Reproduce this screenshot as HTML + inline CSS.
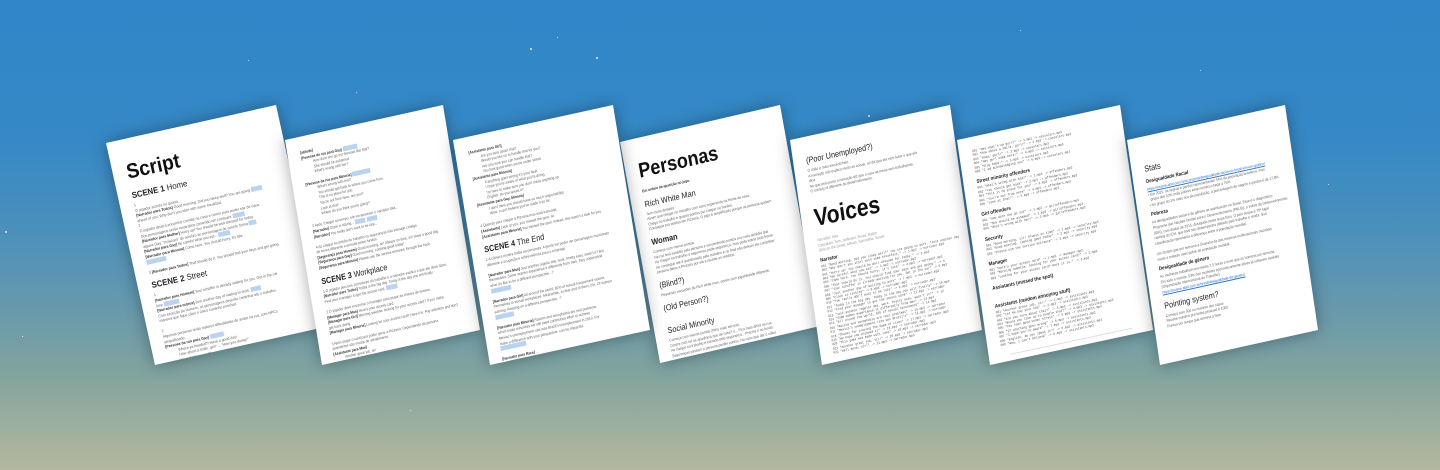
<!DOCTYPE html>
<html><head><meta charset="utf-8"><style>
*{margin:0;padding:0;box-sizing:border-box}
body{width:1440px;height:470px;overflow:hidden;position:relative;font-family:"Liberation Sans","DejaVu Sans",sans-serif;
background:linear-gradient(180deg,#2f86c8 0%,#3689c6 30%,#4b90bb 49%,#6598ae 64%,#82a49e 80%,#b3b89e 100%)}
.s{position:absolute;width:2px;height:2px;background:#fff;border-radius:50%;opacity:.85}
.p{position:absolute;left:0;top:0;width:200px;height:240px;background:#fff;transform-origin:0 0;overflow:hidden;
box-shadow:0 0 18px rgba(0,0,0,.35);padding:14px 14px 0 16px;color:#666;font-size:4.1px;line-height:5.6px}
.p h1{font-size:22px;line-height:26px;color:#111;font-weight:bold;margin:8px 0 6px}
.p h2{font-size:9px;line-height:12px;color:#222;font-weight:normal;margin:5px 0 2px}
.p h2 b{font-weight:bold}
.p h3{font-size:5.5px;line-height:8px;color:#222;margin:4px 0 1px}
.p .l{white-space:nowrap}
.p .l b{color:#333}
.p .i{padding-left:14px;white-space:nowrap}
.p .m{font-family:"Liberation Mono",monospace;font-size:3.6px;line-height:4.4px;white-space:nowrap;color:#555}
.hl{background:#b9d3f0;color:#b9d3f0}
.a{color:#2a6fc9;text-decoration:underline}
.g{color:#999}
</style></head><body>
<div class="s" style="left:530px;top:48px"></div>
<div class="s" style="left:596px;top:57px"></div>
<div class="s" style="left:557px;top:37px;width:1px;height:1px"></div>
<div class="s" style="left:5px;top:231px"></div>
<div class="s" style="left:22px;top:336px;width:1px;height:1px"></div>
<div class="s" style="left:868px;top:115px"></div>
<div class="s" style="left:1328px;top:184px;width:1px;height:1px"></div>
<div class="s" style="left:410px;top:410px;width:1px;height:1px"></div>
<div class="s" style="left:1020px;top:30px;width:1px;height:1px"></div>
<div class="s" style="left:1200px;top:70px;width:1px;height:1px"></div>
<div class="s" style="left:356px;top:92px;width:1px;height:1px"></div>
<div class="s" style="left:248px;top:60px;width:1px;height:1px"></div>

<!-- Page 1 -->
<div class="p" style="transform:matrix(.85,-.19,.204,.925,106,143);z-index:1">
<h1>Script</h1>
<h2><b>SCENE 1</b> Home</h2>
<div class="l">1</div>
<div class="l">O jogador acorda no quarto.</div>
<div class="l"><b>[Narrador para Todos]</b> Good morning. Did you sleep well? You are going <span class="hl">to work</span></div>
<div class="l">ahead of you. Why don't you start with some breakfast.</div>
<div class="l">2</div>
<div class="l">O jogador deverá encontrar comida na casa e comer para poder sair de casa.</div>
<div class="l">Dos personagens serão mostrados comendo um croissant. <span class="hl">______</span></div>
<div class="l"><b>[Narrador para Mulher]</b> Hurry up! You should be well-dressed for today.</div>
<div class="l">alguns Gay, "croissant" do cérebro ao personagem de cuento forma <span class="hl">____</span></div>
<div class="l"><b>[Narrador para Gay]</b> Be careful what you eat... <span class="hl">______</span></div>
<div class="l"><b>[Narrador para Minoria]</b> Come here. You should hurry, it's late</div>
<div class="l"><span class="hl">__________</span></div>
<div class="l">&nbsp;</div>
<div class="l">3 <b>[Narrador para Todos]</b> That should do it. You should find your keys and get going.</div>
<h2><b>SCENE 2</b> Street</h2>
<div class="l">1</div>
<div class="l"><b>[Narrador para Homem]</b> Your schaffer is already waiting for you. Get in the car</div>
<div class="l">time <span class="hl">________</span></div>
<div class="l"><b>[Narrador para outros]</b> Just another day of waiting to work. <span class="hl">_____</span></div>
<div class="l">Com exceção do Homem, os personagens deverão caminhar até o trabalho.</div>
<div class="l">maneira que fique claro o único caminho possível.</div>
<div class="l">&nbsp;</div>
<div class="l">2</div>
<div class="l">Algumas personas terão maiores dificuldades de andar na rua, com NPCs</div>
<div class="l">atrapalhando.</div>
<div class="l"><b>[Pessoas da rua para Gay]</b> <span class="hl">_______</span></div>
<div class="i">Where ya headed?! Have a good day!</div>
<div class="i">How about a smile, girl? ... "How you doing?"</div>
<div class="i">Hey what's up gurl?</div>
<div class="i">Daaa, gurl!</div>
<div class="i">I am acknowledging you for being beautiful!</div>
<div class="i">Hey, gurl!</div>
<div class="i">Hey gurl come here!</div>
<div class="i">Stay babe!</div>
</div>

<!-- Page 2 -->
<div class="p" style="transform:matrix(.79,-.175,.154,.9375,285,140);z-index:2">
<div class="l"><b>[atitude]</b></div>
<div class="l"><b>[Pessoas da rua para Gay]</b> <span class="hl">________</span></div>
<div class="i">How dare she go out dressed like that?</div>
<div class="i">She should be ashamed</div>
<div class="i">What's wrong with her?</div>
<div class="l">&nbsp;</div>
<div class="l"><b>[Pessoas da rua para Minoria]</b> <span class="hl">__________</span></div>
<div class="i">What's wrong with him?</div>
<div class="i">You should get back to where you came from.</div>
<div class="i">This is no place for you.</div>
<div class="i">You're not from here, are you?</div>
<div class="i">Look at that!</div>
<div class="i">Where do you think you're going?</div>
<div class="l">&nbsp;</div>
<div class="l">3 Após "chegar ao tempo, ele vai aparecer o narrador fala...</div>
<div class="l"><b>[Narrador]</b> Clock is ticking... <span class="hl">______</span> <span class="hl">______</span></div>
<div class="l"><b>[Narrador]</b> You really don't want to be late...</div>
<div class="l">&nbsp;</div>
<div class="l">4 Ao chegar no prédio do trabalho os seguranças irão interagir contigo</div>
<div class="l">de forma diferente a entrada pelos fundos.</div>
<div class="l"><b>[Segurança para Homem]</b> Good morning, sir! Always on time, sir! Have a good day.</div>
<div class="l"><b>[Segurança para Gay]</b> Good morning. Looking good today!</div>
<div class="l"><b>[Segurança para Minoria]</b> Please use the service entrance through the back.</div>
<h2><b>SCENE 3</b> Workplace</h2>
<div class="l">1 O jogador percorre corredores do trabalho e o narrador explica o que ele deve fazer.</div>
<div class="l"><b>[Narrador para Todos]</b> Today is the big day. Today is the day you will finally</div>
<div class="l">Find your manager to get the access card. <span class="hl">______</span></div>
<div class="l">&nbsp;</div>
<div class="l">2 O jogador deve encontrar o manager para pegar as chaves de acesso.</div>
<div class="l"><b>[Manager para Man]</b> Here's your access card.</div>
<div class="l"><b>[Manager para Girl]</b> Morning sweetie, looking for your access card? If you make</div>
<div class="l">get back doing.</div>
<div class="l"><b>[Manager para Minoria]</b> Looking for your access card? Here it is. Pay attention and don't</div>
<div class="l">&nbsp;</div>
<div class="l">3 Após pegar o card para poder gerar a Pizzaria. Dependendo da persona</div>
<div class="l">assistentes vão mudar de atendimento.</div>
<div class="l"><b>[Assistants para Man]</b></div>
<div class="i">Another great job, sir!</div>
<div class="i">Let me pay your cab after work.</div>
<div class="i">Well done, sir!</div>
</div>

<!-- Page 3 -->
<div class="p" style="transform:matrix(.8,-.175,.154,.9375,453,140);z-index:3">
<div class="l"><b>[Assistants para Girl]</b></div>
<div class="i">Are you sure about that?</div>
<div class="i">Would you like us to handle that for you?</div>
<div class="i">Are you sure you can handle that?</div>
<div class="i">You look good when you're under stress.</div>
<div class="l"><b>[Assistants para Minoria]</b></div>
<div class="i">If anything goes wrong it's your fault.</div>
<div class="i">I hope you're aware of what you're doing.</div>
<div class="i">I'm here to make sure you don't mess anything up.</div>
<div class="i">English, do you speak it?</div>
<div class="l"><b>[Assistants para Gay, Minoria]</b></div>
<div class="i">I don't think you should have so much responsibility.</div>
<div class="i">Wow, I can't believe you've made it so far.</div>
<div class="l">&nbsp;</div>
<div class="l">4 Quando para chegar a Pizzaria mas está trancada.</div>
<div class="l"><b>[Assistants]</b> Look at you, you missed the spot, sir.</div>
<div class="l"><b>[Assistants para Minoria]</b> You missed the spot. Indeed, this wasn't a task for you.</div>
<h2><b>SCENE 4</b> The End</h2>
<div class="l">1 A câmera mostra todas as personas. A gente vai poder ver personagem mostrando</div>
<div class="l">diferente a ocupação e sobrevivência para o emprego.</div>
<div class="l">&nbsp;</div>
<div class="l"><b>[Narrador para Man]</b> Just another regular day, work. Pretty easy, wasn't it? But</div>
<div class="l">themselves. Some women experience it differently from men, they understand</div>
<div class="l">what it's like to be a different perspective...?</div>
<div class="l"><span class="hl">___________</span></div>
<div class="l">&nbsp;</div>
<div class="l"><b>[Narrador para Girl]</b> All around the world, 82% of sexual harassment victims</div>
<div class="l">themselves in sexual workplaces. Meanwhile, a clear and of them, 6%. Of women</div>
<div class="l">earning. Keeping on a different perspective...?</div>
<div class="l"><span class="hl">__________</span></div>
<div class="l">&nbsp;</div>
<div class="l"><b>[Narrador para Minoria]</b> Racism and xenophobia are real problems.</div>
<div class="l">which make minorities we still need continuous effort to achieve</div>
<div class="l">Mexico's unemployment rate was Brazil's unemployment in 2010. For</div>
<div class="l">make a difference with your perspective, can be impactful.</div>
<div class="l"><span class="hl">______________</span></div>
<div class="l">&nbsp;</div>
<div class="l"><b>[Narrador para Race]</b> ...</div>
<div class="l">&nbsp;</div>
<div class="l">2 <b>[Narrador para Todos]</b> Thanks for playing The Game of Lives. We hope</div>
<div class="l">ourselves. This game was made with love by the Indie Brazil Team. We are</div>
<div class="l">Cunha, Diego Tomaz, Cristiano Medeiros (Collins), Leonardo Schiefeld, Victoria Alves</div>
</div>

<!-- Page 4 -->
<div class="p" style="transform:matrix(.8,-.185,.167,.921,620,142);z-index:0">
<h1>Personas</h1>
<div class="l" style="font-size:4px"><b>Em ordem de aparição no jogo.</b></div>
<h2>Rich White Man</h2>
<div class="l">Tem muito dinheiro.</div>
<div class="l">Assim que chegar no trabalho com carro esperando na frente de casa.</div>
<div class="l">Chega no trabalho e quanto pontos por chegar no horário.</div>
<div class="l">Consegue pra tarefas em Pizzaria. O jogo é simplificado porque as pessoas ajudam.</div>
<h2 style="font-weight:bold">Woman</h2>
<div class="l">Começa com menos pontos.</div>
<div class="l">Na rua terá assédio pela persona e vai perdendo pontos pra cada assédio que</div>
<div class="l">Ao chegar no trabalho o segurança pede segurança, mas pode entrar pela frente.</div>
<div class="l">Ao conseguir ele é questionado pelo trabalho e no final não deixam ela completar</div>
<div class="l">persona deixa a Pizzaria por ela e recebe os créditos.</div>
<h2>(Blind?)</h2>
<div class="l">Pequenas variações do Rich white man, porém com jogabilidade diferente.</div>
<h2>(Old Person?)</h2>
<div class="l">&nbsp;</div>
<h2>Social Minority</h2>
<div class="l">Começa com menos pontos (ficha mais escura).</div>
<div class="l">Ocorre com tal na aparência que de casa? o... Fica mais difícil na rua.</div>
<div class="l">Ao chegar no trabalho é barrado pelo segurança... Precisa ir no fundo.</div>
<div class="l">Seguranças passam a persona perder pontos. No caso que dar o voltar.</div>
<div class="l">No final do trabalho ela a dificuldade por chegar sua cerquem dado e se desenvolve.</div>
</div>

<!-- Page 5 -->
<div class="p" style="transform:matrix(.8,-.175,.133,.9375,790,140);z-index:1">
<h2>(Poor Unemployed?)</h2>
<div class="l">O chão é mais escuro/cheio.</div>
<div class="l">A narração não explica muito as coisas, só diz que ela vem fazer o que ela</div>
<div class="l">dica.</div>
<div class="l">No que pelo porto a narração diz que o cara na mesa vem trabalhando.</div>
<div class="l">O começo é diferente do desenvolvimento.</div>
<h1 style="font-size:26px;line-height:30px;margin-top:10px">Voices</h1>
<div class="l g">Narrador: Alex</div>
<div class="l g">Cassalars: Tom, Jefferson, Bruce, Ralph</div>
<div class="l g">Girls on the Street: Allison, Samantha, Susan</div>
<h3>Narrator</h3>
<div class="m">001 "Good morning. Did you sleep well?" You are going to work. "Just another day</div>
<div class="m">002 "Why don't you start with some breakfast." -&gt; 1.mp3 -&gt; narrador.mp3</div>
<div class="m">003 "Hurry up! You should be well-dressed for today." -&gt; 2.mp3</div>
<div class="m">004 "Be careful what you eat" -&gt; 3.mp3 -&gt; narrador.mp3</div>
<div class="m">005 "Come here. You should hurry, it's late" -&gt; 4.mp3 -&gt; narrador.mp3</div>
<div class="m">006 "That should do it. You should find your keys and get going." -&gt; 5</div>
<div class="m">007 "Your schaffer is already waiting for you. Get in the car" -&gt; 6.mp3</div>
<div class="m">008 "Just another day of waiting to work" -&gt; 7.mp3 -&gt; narrador.mp3</div>
<div class="m">009 "Clock is ticking" -&gt; 8.mp3 -&gt; narrador.mp3</div>
<div class="m">010 "You really don't want to be late" -&gt; 9.mp3 -&gt; narrador.mp3</div>
<div class="m">011 "Today is the big day. Today is the day you will finally" -&gt; 10.mp3</div>
<div class="m">012 "Find your manager to get the access card" -&gt; 11.mp3 -&gt; narrador</div>
<div class="m">013 "Just another regular day, work. Pretty easy, wasn't it?" -&gt; 12</div>
<div class="m">014 "Some women experience it differently from men" -&gt; 13.mp3</div>
<div class="m">015 "All around the world, 82% of sexual harassment" -&gt; 14.mp3</div>
<div class="m">016 "Racism and xenophobia are real problems" -&gt; 15.mp3 -&gt; narrador</div>
<div class="m">017 "Mexico's unemployment rate was Brazil's" -&gt; 16.mp3 -&gt; narrador</div>
<div class="m">018 "Thanks for playing The Game of Lives" -&gt; 17.mp3 -&gt; narrador.mp3</div>
<div class="m">019 "We hope you enjoyed it" -&gt; 18.mp3 -&gt; narrador.mp3</div>
<div class="m">020 "This game was made with love" -&gt; 19.mp3 -&gt; narrador.mp3</div>
<div class="m">021 "Another great job, sir!" -&gt; 20.mp3 -&gt; narrador.mp3</div>
<div class="m">022 "Well done, sir!" -&gt; 21.mp3 -&gt; narrador.mp3</div>
<div class="l">&nbsp;</div>
<h3>Cassalars</h3>
<div class="m">001 "Where ya headed?! Have a good day!" -&gt; 1.mp3 -&gt; cassalars.mp3</div>
</div>

<!-- Page 6 -->
<div class="p" style="transform:matrix(.815,-.175,.1375,.9375,957,140);z-index:2">
<div class="m">001 "Hey what's up gurl?" -&gt; 1.mp3 -&gt; cassalars.mp3</div>
<div class="m">002 "How about a smile, girl?" -&gt; 2.mp3 -&gt; cassalars.mp3</div>
<div class="m">003 "Daaa, gurl!" -&gt; 3.mp3 -&gt; cassalars.mp3</div>
<div class="m">004 "Hey gurl come here!" -&gt; 4.mp3 -&gt; cassalars.mp3</div>
<div class="m">005 "Stay babe!" -&gt; 5.mp3 -&gt; cassalars.mp3</div>
<div class="m">006 "I am acknowledging you" -&gt; 6.mp3 -&gt; cassalars.mp3</div>
<h3>Street minority offenders</h3>
<div class="m">001 "What's wrong with him?" -&gt; 1.mp3 -&gt; offenders.mp3</div>
<div class="m">002 "You should get back" -&gt; 2.mp3 -&gt; offenders.mp3</div>
<div class="m">003 "This is no place for you" -&gt; 3.mp3 -&gt; offenders.mp3</div>
<div class="m">004 "You're not from here" -&gt; 4.mp3 -&gt; offenders.mp3</div>
<div class="m">005 "Look at that!" -&gt; 5.mp3 -&gt; offenders.mp3</div>
<h3>Girl offenders</h3>
<div class="m">001 "How dare she go out" -&gt; 1.mp3 -&gt; girloffenders.mp3</div>
<div class="m">002 "She should be ashamed" -&gt; 2.mp3 -&gt; girloffenders.mp3</div>
<div class="m">003 "What's wrong with her?" -&gt; 3.mp3 -&gt; girloffenders.mp3</div>
<h3>Security</h3>
<div class="m">001 "Good morning, sir! Always on time" -&gt; 1.mp3 -&gt; security.mp3</div>
<div class="m">002 "Good morning. Looking good today" -&gt; 2.mp3 -&gt; security.mp3</div>
<div class="m">003 "Please use the service entrance" -&gt; 3.mp3 -&gt; security.mp3</div>
<h3>Manager</h3>
<div class="m">001 "Here's your access card" -&gt; 1.mp3 -&gt; manager.mp3</div>
<div class="m">002 "Morning sweetie, looking for your access card?" -&gt; 2.mp3</div>
<div class="m">003 "Looking for your access card? Here it is." -&gt; 3.mp3</div>
<h3>Assistants (missed the spot)</h3>
<div class="l">&nbsp;</div>
<h3>Assistants (random annoying stuff)</h3>
<div class="m">001 "Another great job, sir!" -&gt; 1.mp3 -&gt; assistants.mp3</div>
<div class="m">002 "Let me pay your cab" -&gt; 2.mp3 -&gt; assistants.mp3</div>
<div class="m">003 "Are you sure about that?" -&gt; 3.mp3 -&gt; assistants.mp3</div>
<div class="m">004 "Would you like us to handle that?" -&gt; 4.mp3 -&gt; assistants.mp3</div>
<div class="m">005 "You look good under stress" -&gt; 5.mp3 -&gt; assistants.mp3</div>
<div class="m">006 "If anything goes wrong" -&gt; 6.mp3 -&gt; assistants.mp3</div>
<div class="m">007 "I hope you're aware" -&gt; 7.mp3 -&gt; assistants.mp3</div>
<div class="m">008 "English, do you speak it?" -&gt; 8.mp3 -&gt; assistants.mp3</div>
<div class="m">009 "Wow, I can't believe" -&gt; 9.mp3 -&gt; assistants.mp3</div>
<div style="border-top:1px solid #ddd;margin:8px 10px 0"></div>
</div>

<!-- Page 7 -->
<div class="p" style="transform:matrix(.79,-.175,.1375,.9375,1127,140);z-index:3">
<h2 style="margin-top:14px">Stats</h2>
<h3>Desigualdade Racial</h3>
<div class="l a">https://exame.abril.com.br/economia/desigualdade-racial-no-brasil-em-um-grafico/</div>
<div class="l">• Em 2015, os negros e pardos representavam 54% da população brasileira, mas</div>
<div class="l">&nbsp;&nbsp;grupo dos 10% mais pobres esse número chega a 75%.</div>
<div class="l">• No grupo do 1% mais rico da população, a porcentagem de negros e pardos é de 17,8%.</div>
<h3>Pobreza</h3>
<div class="l">As desigualdades social e de gênero se acentuaram no Brasil. Esse é o diagnóstico</div>
<div class="l">Programa das Nações Unidas para o Desenvolvimento (PNUD), o índice de Desenvolvimento</div>
<div class="l">(IDH), com dados de 2015, divulgado nesta terça-feira. O país ocupa a 79ª lugar</div>
<div class="l">ranking do IDH, que teve seu desempenho afetado pelo trabalho e renda. Sua</div>
<div class="l">classificação representa a diferença entre a população mundial.</div>
<div class="l">&nbsp;</div>
<div class="l">Um Oxfam que por semana a Guarana da das mesmas multinacionais mundiais</div>
<div class="l">muito a metade mais pobre da população mundial.</div>
<h3>Desigualdade de gênero</h3>
<div class="l">As mulheres trabalham em média 7,5 horas a mais que os homens por semana.</div>
<div class="l">Em todo o mundo, 53% das mulheres economicamente ativas já sofreram assédio.</div>
<div class="l">(Organização Internacional do Trabalho)</div>
<div class="l a">https://exame.abril.com.br/brasil/desigualdade-de-genero/</div>
<h2>Pointing system?</h2>
<div class="l">Começa com 500 no máximo dos casos</div>
<div class="l">Recebe máximo pra todas pessoas é 1000</div>
<div class="l">Pontua por tempo que termina a fase</div>
</div>
</body></html>
